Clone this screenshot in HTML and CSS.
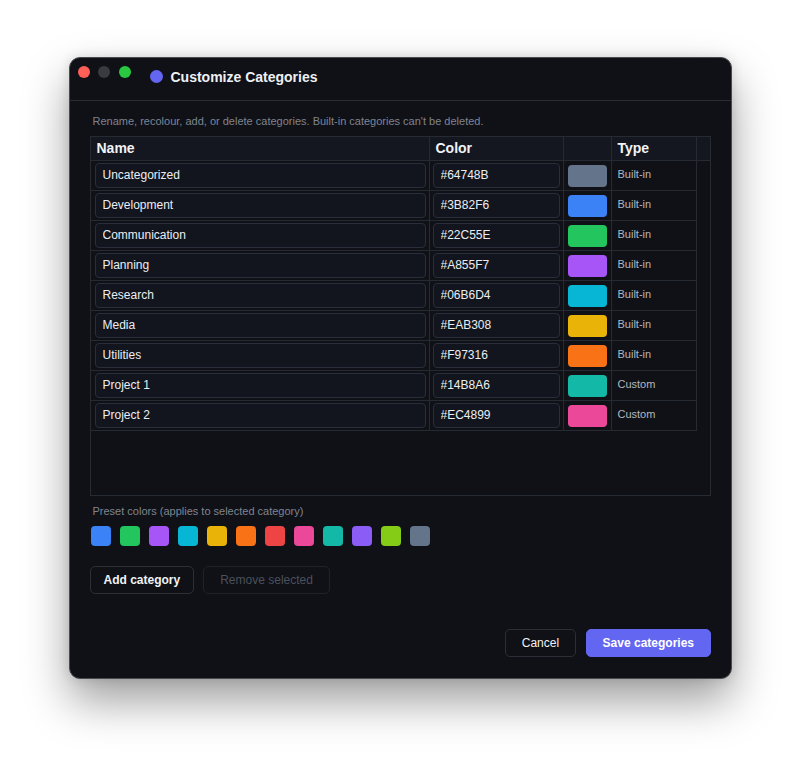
FILE: index.html
```html
<!DOCTYPE html>
<html lang="en">
<head>
  <meta charset="UTF-8">
  <meta name="viewport" content="width=device-width, initial-scale=1.0">
  <title>Customize Categories</title>
  <link rel="stylesheet" href="styles.css">
</head>
<body>
  <div class="window">
    <header class="titlebar">
      <div class="lights">
        <span class="light red"></span>
        <span class="light gray"></span>
        <span class="light green"></span>
      </div>
      <span class="title-dot"></span>
      <h1>Customize Categories</h1>
    </header>

    <div class="content">
      <p class="hint">Rename, recolour, add, or delete categories. Built-in categories can't be deleted.</p>

      <div class="table">
        <div class="head-row">
          <div class="cell">Name</div>
          <div class="cell">Color</div>
          <div class="cell"></div>
          <div class="cell">Type</div>
          <div class="cell"></div>
        </div>
        <div id="rows"></div>
      </div>

      <p class="hint preset-label">Preset colors (applies to selected category)</p>
      <div class="presets" id="presets"></div>

      <div class="actions">
        <button class="btn btn-add">Add category</button>
        <button class="btn btn-remove" disabled>Remove selected</button>
      </div>

      <div class="footer">
        <button class="btn btn-cancel">Cancel</button>
        <button class="btn btn-primary">Save categories</button>
      </div>
    </div>
  </div>

  <script>
    const categories = [
      { name: 'Uncategorized', color: '#64748B', type: 'Built-in' },
      { name: 'Development', color: '#3B82F6', type: 'Built-in' },
      { name: 'Communication', color: '#22C55E', type: 'Built-in' },
      { name: 'Planning', color: '#A855F7', type: 'Built-in' },
      { name: 'Research', color: '#06B6D4', type: 'Built-in' },
      { name: 'Media', color: '#EAB308', type: 'Built-in' },
      { name: 'Utilities', color: '#F97316', type: 'Built-in' },
      { name: 'Project 1', color: '#14B8A6', type: 'Custom' },
      { name: 'Project 2', color: '#EC4899', type: 'Custom' }
    ];

    const presets = ['#3b82f6', '#22c55e', '#a855f7', '#06b6d4', '#eab308', '#f97316',
      '#ef4444', '#ec4899', '#14b8a6', '#8b5cf6', '#84cc16', '#64748b'];

    const rows = document.getElementById('rows');
    categories.forEach(cat => {
      const row = document.createElement('div');
      row.className = 'row';
      row.innerHTML = `
        <div class="cell cell-input"><input type="text" value="${cat.name}"></div>
        <div class="cell cell-input"><input type="text" value="${cat.color}"></div>
        <div class="cell cell-swatch"><span class="swatch" style="background-color: ${cat.color}"></span></div>
        <div class="cell cell-type">${cat.type}</div>`;
      rows.appendChild(row);
    });

    const presetBox = document.getElementById('presets');
    presets.forEach(color => {
      const chip = document.createElement('span');
      chip.className = 'preset';
      chip.style.backgroundColor = color;
      presetBox.appendChild(chip);
    });
  </script>
</body>
</html>
```

FILE: styles.css
```css
html {
  background-color: #ffffff;
}

body {
  margin: 0;
  padding-top: 57px;
  min-height: 774px;
  box-sizing: border-box;
  font-family: "Liberation Sans", Arial, sans-serif;
}

.window {
  width: 663px;
  box-sizing: border-box;
  margin: 0 auto;
  background-color: #0f1117;
  border: 1px solid #4a4b50;
  border-radius: 11px;
  box-shadow: 0 22px 45px rgba(0, 0, 0, 0.38), 0 0 12px rgba(0, 0, 0, 0.12);
  overflow: hidden;
}

.titlebar {
  height: 42px;
  display: flex;
  align-items: flex-start;
  padding-left: 8px;
  border-bottom: 1px solid #2a2c33;
}

.lights {
  display: flex;
  gap: 8.5px;
  margin-top: 8px;
}

.light {
  width: 12px;
  height: 12px;
  border-radius: 50%;
}

.red { background-color: #fe5f57; }
.gray { background-color: #3a3b40; }
.green { background-color: #2ac840; }

.title-dot {
  width: 13px;
  height: 13px;
  border-radius: 50%;
  background-color: #6366f1;
  margin: 12px 8px 0 19px;
}

h1 {
  margin: 11px 0 0 0;
  font-size: 14px;
  line-height: 16px;
  font-weight: bold;
  color: #eef0f4;
}

.content {
  padding: 13px 20px 21px 20px;
}

.hint {
  margin: 0 0 8px 3px;
  font-size: 11px;
  line-height: 14px;
  color: #7f8490;
}

.table {
  height: 360px;
  box-sizing: border-box;
  border: 1px solid #262a33;
}

.head-row {
  display: grid;
  grid-template-columns: 339px 134px 48px 85px 13px;
  height: 24px;
  background-color: #141720;
}

.row {
  display: grid;
  grid-template-columns: 339px 134px 48px 85px;
  width: 606px;
  height: 30px;
}

.cell {
  box-sizing: border-box;
  border-right: 1px solid #262a33;
  border-bottom: 1px solid #262a33;
}

.head-row .cell {
  padding-left: 6px;
  font-size: 14px;
  font-weight: bold;
  line-height: 23px;
  color: #f1f3f6;
}

.head-row .cell:last-child {
  border-right: none;
}

.cell-input {
  padding: 2px 3px 2px 4px;
}

.cell-input + .cell-input {
  padding-left: 3px;
}

input {
  width: 100%;
  height: 25px;
  box-sizing: border-box;
  padding: 0 7px 1px 7px;
  background-color: #12151d;
  border: 1px solid #2a2e3a;
  border-radius: 4px;
  color: #eceef2;
  font-size: 12px;
  font-family: "Liberation Sans", Arial, sans-serif;
}

.cell-swatch {
  padding: 4px 0 0 4px;
}

.swatch {
  display: block;
  width: 39px;
  height: 22px;
  border-radius: 4px;
}

.cell-type {
  padding-left: 6px;
  font-size: 11px;
  line-height: 27px;
  color: #b3b7c0;
}

.preset-label {
  margin-top: 8px;
}

.presets {
  display: flex;
  gap: 9px;
  padding-left: 1px;
}

.preset {
  width: 20px;
  height: 20px;
  border-radius: 4px;
}

.actions {
  display: flex;
  gap: 9px;
  margin-top: 20px;
}

.btn {
  height: 28px;
  padding: 0 15px;
  background-color: #0f1117;
  border: 1px solid #2c2f38;
  border-radius: 5px;
  color: #f1f3f6;
  font-size: 12px;
  font-family: "Liberation Sans", Arial, sans-serif;
  cursor: pointer;
}

.btn-add {
  padding: 0 13px;
  font-weight: bold;
}

.btn-remove {
  padding: 0 16px;
}

.btn-cancel {
  padding: 0 16px;
}

.btn:disabled {
  color: #4b505b;
  border-color: #1f222a;
  cursor: default;
}

.footer {
  display: flex;
  justify-content: flex-end;
  gap: 10px;
  margin-top: 35px;
}

.btn-primary {
  padding: 0 15.5px;
  background-color: #6366f1;
  border-color: #6366f1;
  color: #ffffff;
  font-weight: bold;
}

.btn-primary:hover {
  background-color: #5558e0;
}
```
